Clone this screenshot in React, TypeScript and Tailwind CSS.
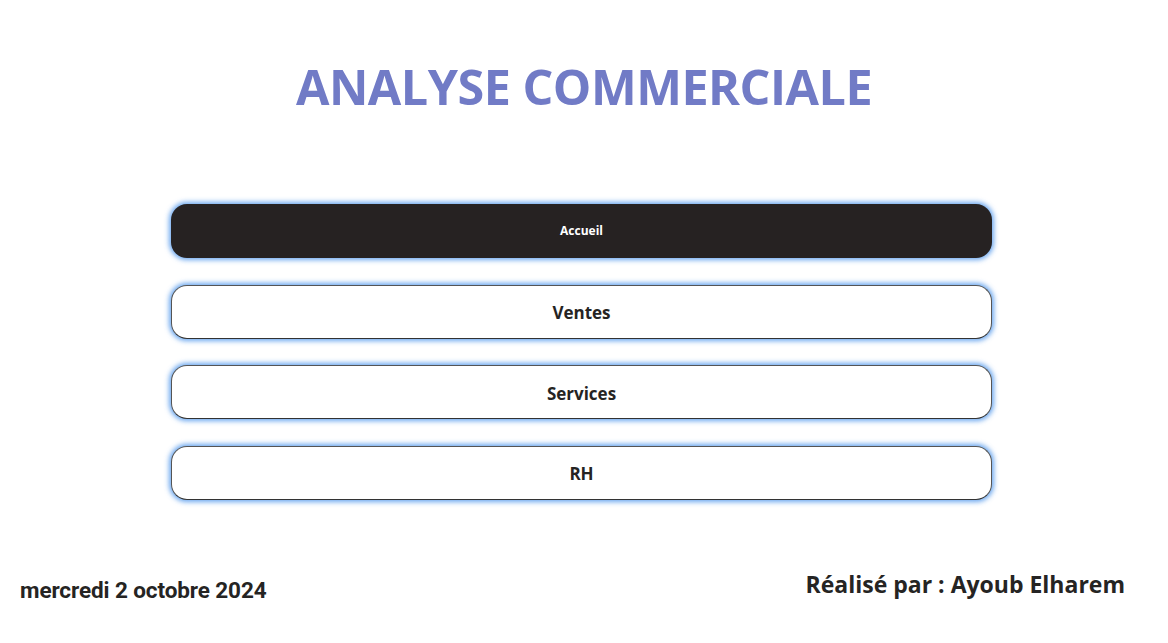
const navItems = [
  { label: "Accueil", active: true },
  { label: "Ventes", active: false },
  { label: "Services", active: false },
  { label: "RH", active: false },
];

export default function App() {
  return (
    <div className="w-[1168px] h-[643px] bg-white flex flex-col font-['Open_Sans',sans-serif] text-[#252423] overflow-hidden">
      <h1 className="text-center text-[48.5px] font-bold text-[#717bc6] pt-[51px] leading-[70px] tracking-[-0.5px]">
        ANALYSE COMMERCIALE
      </h1>

      <div className="flex flex-col gap-[26.5px] ml-[171px] w-[821px] mt-[83px]">
        {navItems.map((item) =>
          item.active ? (
            <div
              key={item.label}
              className="h-[54px] rounded-[16px] bg-[#262222] flex items-center justify-center text-white text-[12px] font-bold shadow-[0_0_5px_2px_rgba(70,145,235,0.8)]"
            >
              {item.label}
            </div>
          ) : (
            <div
              key={item.label}
              className="h-[54px] rounded-[16px] bg-white border border-[#555] border-b-[#333] flex items-center justify-center text-[17px] font-bold pt-[3px] shadow-[0_0_5px_2px_rgba(70,145,235,0.8)]"
            >
              {item.label}
            </div>
          )
        )}
      </div>

      <div className="flex justify-between items-end mt-auto mb-[38px] pl-[20px] pr-[43px]">
        <span className="font-['Roboto',sans-serif] font-bold text-[22.5px] leading-none mb-[4px] tracking-[-0.1px]">
          mercredi 2 octobre 2024
        </span>
        <span className="font-bold text-[23px] leading-none mb-[9px]">Réalisé par : Ayoub Elharem</span>
      </div>
    </div>
  );
}
